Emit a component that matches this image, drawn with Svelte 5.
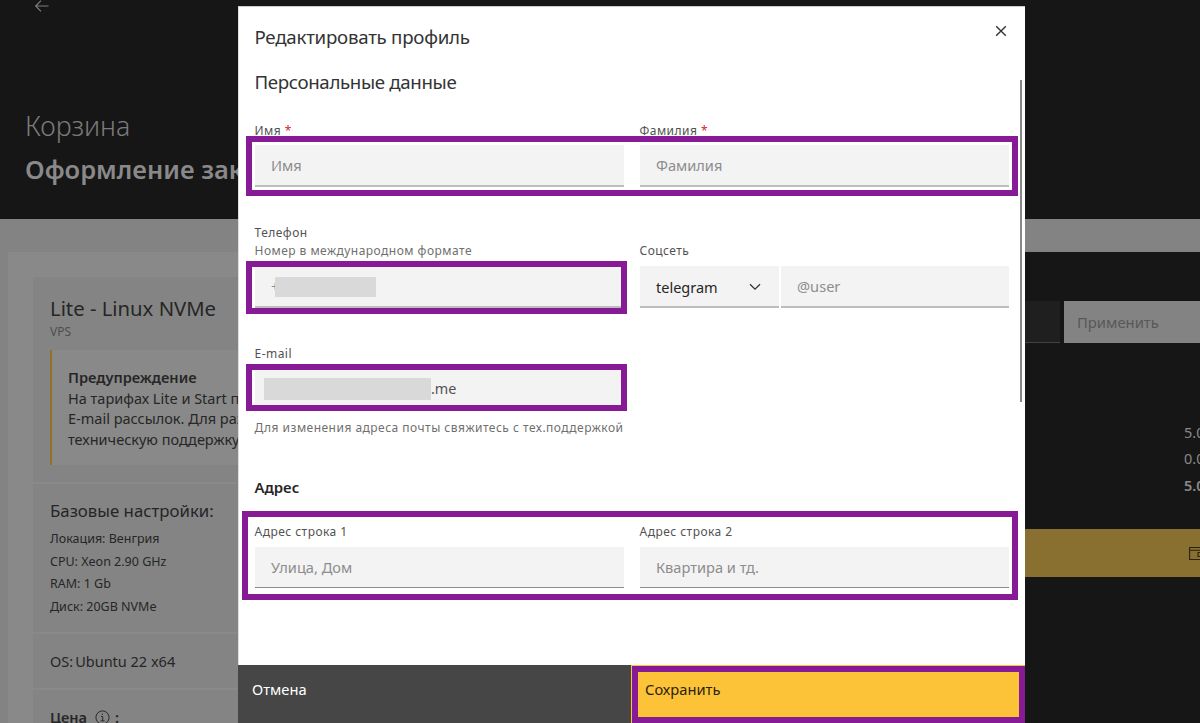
<script>
  const specs = ['Локация: Венгрия', 'CPU: Xeon 2.90 GHz', 'RAM: 1 Gb', 'Диск: 20GB NVMe'];
  const warning = [
    'На тарифах Lite и Start порты',
    'E-mail рассылок. Для разблокировки',
    'техническую поддержку'
  ];
</script>

<div class="page">
  <header class="hero">
    <svg class="back" width="16" height="14" viewBox="0 0 16 14" fill="none" stroke="#7c7c7c" stroke-width="1.2"><path d="M14.5 7H1.7M7 1.7 1.7 7 7 12.3" /></svg>
    <div class="crumb">Корзина</div>
    <h1>Оформление заказа</h1>
  </header>
  <div class="content">
    <section class="order">
      <div class="card product">
        <div class="name">Lite - Linux NVMe</div>
        <div class="kind">VPS</div>
        <div class="warning">
          <b>Предупреждение</b>
          {#each warning as line}<span>{line}</span>{/each}
        </div>
      </div>
      <div class="card specs">
        <div class="cap">Базовые настройки:</div>
        {#each specs as s}<div class="spec">{s}</div>{/each}
      </div>
      <div class="card os"><span>OS:</span><span>Ubuntu 22 x64</span></div>
      <div class="card price">
        <b>Цена</b>
        <svg width="15" height="15" viewBox="0 0 15 15" fill="none" stroke="#2a2a2a"><circle cx="7.5" cy="7.5" r="6.6" /><path d="M6 6.5h1.7v4.3M5.6 10.9h4M7.4 3.6v1.3" /></svg>
        <b>:</b>
      </div>
    </section>
    <section class="total">
      <div class="promo">
        <div class="code"></div>
        <div class="apply">Применить</div>
      </div>
      <div class="sums">
        <span>5.00</span><span>0.00</span><b>5.00</b>
      </div>
      <div class="pay">
        <svg width="20" height="16" viewBox="0 0 20 16" fill="none" stroke="#29230f" stroke-width="1.1"><path d="M.6 1.5H18M.6 1v12.5H18V4.2H.6M18 6.5H9v4h9M11 8.5h2" /></svg>
      </div>
    </section>
  </div>
</div>

<div class="modal">
  <div class="head">
    <div class="title">Редактировать профиль</div>
    <svg width="12" height="12" viewBox="0 0 12 12" fill="none" stroke="#333" stroke-width="1.4"><path d="m1.2 1.2 9.6 9.6M10.8 1.2 1.2 10.8" /></svg>
  </div>
  <div class="body">
    <div class="subtitle">Персональные данные</div>
    <div class="row names">
      <div class="field">
        <label for="first">Имя <i>*</i></label>
        <div class="input" id="first"><span>Имя</span></div>
      </div>
      <div class="field">
        <label for="last">Фамилия <i>*</i></label>
        <div class="input" id="last"><span>Фамилия</span></div>
      </div>
    </div>
    <div class="row contacts">
      <div class="field">
        <label for="phone">Телефон</label>
        <div class="hint">Номер в международном формате</div>
        <div class="input phone" id="phone"><span>+</span><div class="mask"></div></div>
      </div>
      <div class="field social">
        <label for="nick">Соцсеть</label>
        <div class="pair">
          <div class="input select"><span>telegram</span><svg width="12" height="8" viewBox="0 0 12 8" fill="none" stroke="#333" stroke-width="1.3"><path d="m1 1.2 5 5 5-5" /></svg></div>
          <div class="input" id="nick"><span>@user</span></div>
        </div>
      </div>
    </div>
    <div class="field mail">
      <label for="mail">E-mail</label>
      <div class="input mailbox" id="mail"><div class="mask"></div><span>.me</span></div>
      <div class="note">Для изменения адреса почты свяжитесь с тех.поддержкой</div>
    </div>
    <div class="section">Адрес</div>
    <div class="row address">
      <div class="field">
        <label for="line1">Адрес строка 1</label>
        <div class="input" id="line1"><span>Улица, Дом</span></div>
      </div>
      <div class="field">
        <label for="line2">Адрес строка 2</label>
        <div class="input" id="line2"><span>Квартира и тд.</span></div>
      </div>
    </div>
  </div>
  <div class="actions">
    <div class="cancel">Отмена</div>
    <div class="save">Сохранить</div>
  </div>
  <div class="scroll"></div>
</div>

<div class="mark m-names"></div>
<div class="mark m-phone"></div>
<div class="mark m-mail"></div>
<div class="mark m-address"></div>
<div class="mark m-save"></div>

<style>
  :global(body) { margin: 0; overflow: hidden; background: #161616; }
  .page, .modal { font-family: "Noto Sans", sans-serif; box-sizing: border-box; }
  .page *, .modal *, .mark { box-sizing: border-box; }
  .page { width: 1200px; height: 723px; overflow: hidden; background: #838383; color: #262626; white-space: nowrap; }
  .hero { height: 219px; background: #161616; padding: 0 0 0 25px; overflow: hidden; }
  .back { display: block; margin: -1px 0 0 9px; }
  .crumb { margin-top: 95px; line-height: 36px; font-size: 26.8px; font-weight: 300; color: #7b7b7b; }
  h1 { margin: 7px 0 0; line-height: 36px; font-size: 25.5px; font-weight: 600; color: #898989; }
  .content { display: flex; justify-content: space-between; padding: 33px 0 0 8px; }
  .order { width: 760px; height: 480px; padding: 25px; background: #898989; display: flex; flex-direction: column; gap: 2px; }
  .card { background: #848484; padding-left: 17px; flex: none; }
  .product { height: 205px; padding-top: 17px; }
  .name { font-size: 20.3px; line-height: 28px; }
  .kind { font-size: 12px; line-height: 20px; color: #4f4f4f; }
  .warning { margin-top: 8px; height: 115px; padding: 17px 0 0 16px; border-left: 2px solid #927326; background: #898989; display: flex; flex-direction: column; font-size: 14.5px; line-height: 20.6px; }
  .warning b { font-weight: 600; font-size: 14.6px; }
  .specs { height: 148px; padding-top: 14px; }
  .cap { font-size: 16.8px; line-height: 26px; margin-bottom: 4px; }
  .spec { font-size: 12.5px; line-height: 22.5px; }
  .os { height: 54px; display: flex; align-items: center; gap: 2px; font-size: 14.5px; }
  .price { height: 54px; display: flex; align-items: center; gap: 8px; font-size: 14.5px; }
  .price b { font-weight: 600; }
  .price b:last-child { margin-left: -3px; }
  .total { width: 300px; height: 480px; background: #161616; padding-top: 49px; }
  .promo { display: flex; gap: 4px; height: 42px; }
  .code { width: 160px; background: #1f1f1f; border-bottom: 1px solid #414141; }
  .apply { flex: 1; background: #838383; color: #585858; padding-left: 13px; font-size: 14.8px; line-height: 42px; }
  .sums { margin-top: 76px; padding-left: 284px; display: flex; flex-direction: column; color: #898989; font-size: 14.5px; line-height: 26.4px; }
  .sums b { font-weight: 600; }
  .pay { margin-top: 30.6px; height: 48px; background: #897031; padding: 16px 0 0 289px; }

  .modal { position: absolute; left: 238px; top: 6px; width: 787px; height: 717px; background: #fff; color: #262626; display: flex; flex-direction: column; white-space: nowrap; border-top: 1px solid #ccc; overflow: hidden; }
  .modal::before { content: ""; position: absolute; left: 0; top: 0; bottom: 58px; width: 1px; background: #ddd; }
  .head { height: 60px; display: flex; justify-content: space-between; padding: 16px 18.5px 0 16.5px; }
  .head svg { margin-top: 2px; }
  .title, .subtitle { font-size: 18.7px; line-height: 28px; height: 28px; font-weight: 400; letter-spacing: -.25px; color: #333; }
  .subtitle { margin: -1px 0 0 -.5px; letter-spacing: -.35px; }
  .body { flex: 1; padding: 2px 15px 0 17px; }
  .row { display: grid; grid-template-columns: 369px 369px; gap: 16px; }
  label, .hint, .note { display: block; font-size: 12px; height: 18px; line-height: 18px; color: #525252; letter-spacing: .47px; margin-left: -.5px; }
  .hint, .note { color: #6f6f6f; }
  i { color: #da1e28; font-style: normal; }
  .input { height: 42px; background: #f3f3f3; border-bottom: 2px solid #bdbdbd; padding: 0 16px; display: flex; align-items: center; font-size: 14.6px; color: #8d8d8d; }
  .names { margin-top: 25px; height: 102px; }
  .names label { line-height: 19px; }
  .names .input { margin-top: 6px; }
  .contacts { height: 121px; }
  .contacts label { height: 19px; line-height: 20px; }
  .contacts .input { margin-top: 6px; }
  .social { padding-top: 18px; }
  .pair { display: flex; gap: 2px; }
  .pair .input { flex: 1; }
  .pair .select { flex: 0 0 139px; justify-content: space-between; padding: 1px 18px 0 16px; color: #262626; font-size: 14.5px; }
  .mask { background: #d9d9d9; }
  .phone span { width: 4px; overflow: hidden; }
  .phone .mask { width: 101px; height: 20px; margin-top: 1px; flex: none; }
  .mail { width: 369px; }
  .mail label { line-height: 20px; }
  .mailbox { margin-top: 6px; padding-left: 9px; border-bottom: 0; color: #525252; font-size: 14.4px; }
  .mailbox .mask { width: 167px; height: 22px; }
  .mailbox span { margin-top: -2px; }
  .note { margin-top: 8px; line-height: 19px; letter-spacing: .48px; }
  .section { margin: 41px 0 0 -.5px; font-size: 14.9px; line-height: 20px; height: 22px; font-weight: 600; }
  .address { margin-top: 24px; }
  .address .input { margin-top: 6px; border-bottom: 1px solid #8d8d8d; height: 41px; }
  .actions { height: 58px; flex: none; display: flex; font-size: 14.7px; line-height: 49px; }
  .cancel { width: 393px; background: #464646; color: #fff; padding-left: 14px; }
  .save { flex: 1; background: #fdc338; color: #2a2310; padding-left: 14px; }
  .scroll { position: absolute; right: 3px; top: 73px; width: 2px; height: 322px; background: #878787; }
  .mark { position: absolute; border: 6px solid #861b95; }
  .m-names { left: 246px; top: 136px; width: 772px; height: 60px; }
  .m-phone { left: 246px; top: 261px; width: 381px; height: 53px; }
  .m-mail { left: 246px; top: 364px; width: 381px; height: 47px; }
  .m-address { left: 242px; top: 511px; width: 776px; height: 89px; }
  .m-save { left: 632px; top: 666px; width: 393px; height: 57px; }
</style>
